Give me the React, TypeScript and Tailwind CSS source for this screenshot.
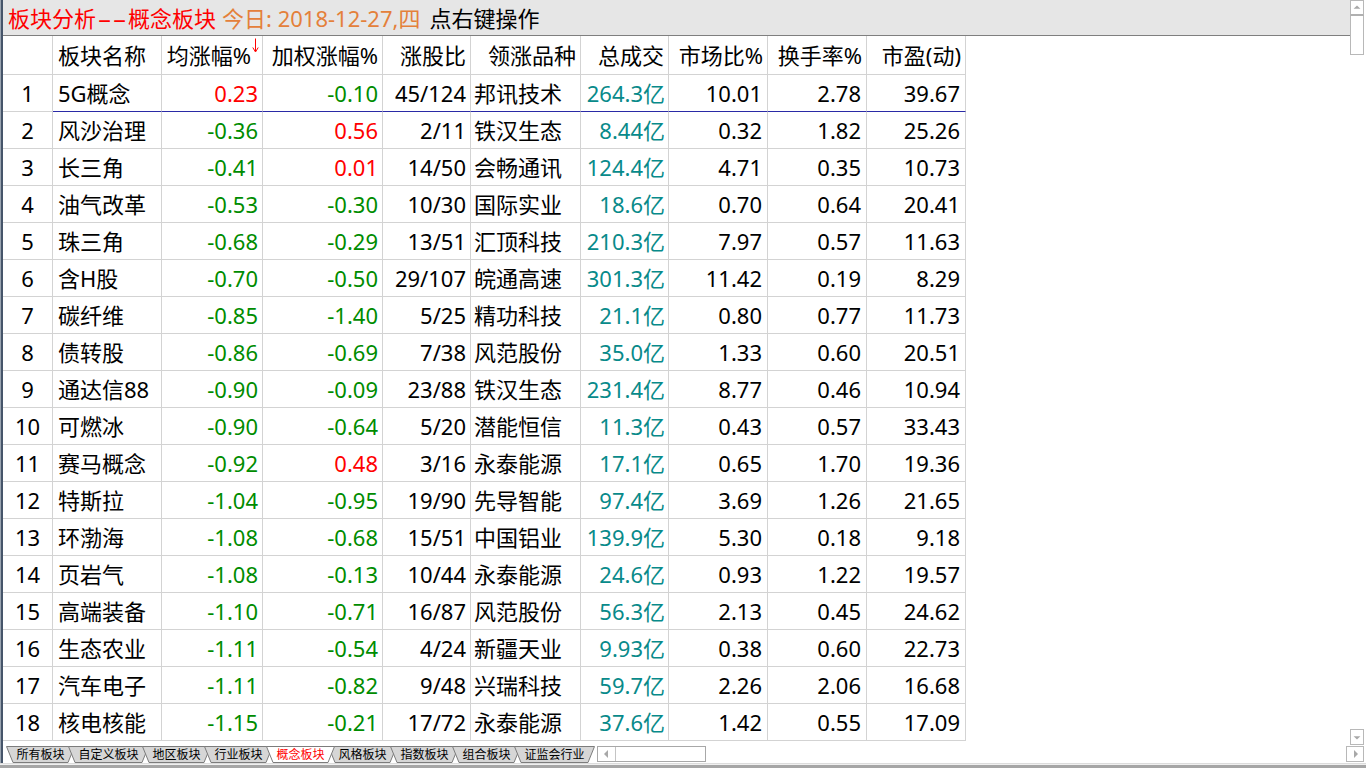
import React from 'react';

type Row = [string, string, string, string, string, string, string, string, string];

const rows: Row[] = [
  ['5G概念', '0.23', '-0.10', '45/124', '邦讯技术', '264.3亿', '10.01', '2.78', '39.67'],
  ['风沙治理', '-0.36', '0.56', '2/11', '铁汉生态', '8.44亿', '0.32', '1.82', '25.26'],
  ['长三角', '-0.41', '0.01', '14/50', '会畅通讯', '124.4亿', '4.71', '0.35', '10.73'],
  ['油气改革', '-0.53', '-0.30', '10/30', '国际实业', '18.6亿', '0.70', '0.64', '20.41'],
  ['珠三角', '-0.68', '-0.29', '13/51', '汇顶科技', '210.3亿', '7.97', '0.57', '11.63'],
  ['含H股', '-0.70', '-0.50', '29/107', '皖通高速', '301.3亿', '11.42', '0.19', '8.29'],
  ['碳纤维', '-0.85', '-1.40', '5/25', '精功科技', '21.1亿', '0.80', '0.77', '11.73'],
  ['债转股', '-0.86', '-0.69', '7/38', '风范股份', '35.0亿', '1.33', '0.60', '20.51'],
  ['通达信88', '-0.90', '-0.09', '23/88', '铁汉生态', '231.4亿', '8.77', '0.46', '10.94'],
  ['可燃冰', '-0.90', '-0.64', '5/20', '潜能恒信', '11.3亿', '0.43', '0.57', '33.43'],
  ['赛马概念', '-0.92', '0.48', '3/16', '永泰能源', '17.1亿', '0.65', '1.70', '19.36'],
  ['特斯拉', '-1.04', '-0.95', '19/90', '先导智能', '97.4亿', '3.69', '1.26', '21.65'],
  ['环渤海', '-1.08', '-0.68', '15/51', '中国铝业', '139.9亿', '5.30', '0.18', '9.18'],
  ['页岩气', '-1.08', '-0.13', '10/44', '永泰能源', '24.6亿', '0.93', '1.22', '19.57'],
  ['高端装备', '-1.10', '-0.71', '16/87', '风范股份', '56.3亿', '2.13', '0.45', '24.62'],
  ['生态农业', '-1.11', '-0.54', '4/24', '新疆天业', '9.93亿', '0.38', '0.60', '22.73'],
  ['汽车电子', '-1.11', '-0.82', '9/48', '兴瑞科技', '59.7亿', '2.26', '2.06', '16.68'],
  ['核电核能', '-1.15', '-0.21', '17/72', '永泰能源', '37.6亿', '1.42', '0.55', '17.09'],
];

const tabs = ['所有板块', '自定义板块', '地区板块', '行业板块', '概念板块', '风格板块', '指数板块', '组合板块', '证监会行业'];

const GRID = 'grid grid-cols-[50px_109px_101px_120px_88px_110px_88px_99px_99px_99px] w-[963px]';
const CELL = 'flex items-center border-r border-b border-[#d3d3d3] whitespace-nowrap overflow-hidden';

const pctColor = (v: string) => {
  const n = parseFloat(v);
  if (n > 0) return 'text-[#ff0000]';
  if (n < 0) return 'text-[#008c00]';
  return 'text-black';
};

const SortArrow = () => (
  <svg width="7" height="15" viewBox="0 0 7 15" className="self-start mt-[2px] ml-[1px]">
    <path d="M3.5 0.5 V13" stroke="#ff0000" strokeWidth="1" />
    <path d="M0.8 9.5 L3.5 14 L6.2 9.5" stroke="#ff0000" strokeWidth="1" fill="none" />
  </svg>
);

const Tab = ({ label, active, first }: { label: string; active: boolean; first: boolean }) => {
  const w = label.length * 12 + 21;
  return (
    <div
      className={`relative h-[17px] shrink-0 ${first ? '' : '-ml-[7px]'} ${active ? 'z-10' : ''} ${
        label.length === 5 ? 'w-[81px]' : 'w-[69px]'
      }`}
    >
      <svg width={w} height="17" className="absolute inset-0">
        <polygon
          points={`0.5,0.5 ${w - 0.5},0.5 ${w - 7},16.5 7,16.5`}
          fill={active ? '#ffffff' : '#d6d6d6'}
          stroke="#7c7c7c"
          strokeWidth="1"
        />
      </svg>
      <div
        className={`relative flex h-full items-center justify-center text-[12px] leading-[16px] ${
          active ? 'text-[#ff0000]' : 'text-black'
        }`}
      >
        {label}
      </div>
    </div>
  );
};

const ScrollBtn = ({ dir }: { dir: 'up' | 'down' | 'left' | 'right' }) => {
  const pts = {
    up: '3,8 7,4 11,8',
    down: '3,6 7,10 11,6',
    left: '8,3 4,7 8,11',
    right: '6,3 10,7 6,11',
  }[dir];
  return (
    <svg width="14" height="14" viewBox="0 0 14 14">
      <polygon points={pts} fill="#a8a8a8" />
    </svg>
  );
};

const Dash = () => <span className="inline-block w-[15px] text-center scale-x-[2]">-</span>;

export default function App() {
  return (
    <div className="w-[1366px] h-[768px] flex flex-col bg-white overflow-hidden font-['Noto_Sans','Noto_Sans_CJK_SC',sans-serif] text-black">
      <div className="flex h-[745px]">
        <div className="w-[3px] border-l border-[#9aa4b0] bg-[#46556a]" />
        <div className="flex-1 flex flex-col">
          {/* title bar */}
          <div className="h-[36px] shrink-0 bg-[#e6e6e6] border-b border-[#7f7f7f] flex items-center pl-[5px] text-[22px] leading-none whitespace-nowrap">
            <span className="text-[#ff0000]">
              板块分析
              <span className="mx-[1px]">
                <Dash />
                <Dash />
              </span>
              概念板块
            </span>
            <span className="ml-[6px] text-[#e4803a]">今日: 2018-12-27,四</span>
            <span className="ml-[9px] text-black">点右键操作</span>
          </div>

          {/* table */}
          <div className="text-[22px] leading-none">
            <div className={`${GRID} h-[39px]`}>
              <div className={CELL} />
              <div className={`${CELL} pl-[5px]`}>板块名称</div>
              <div className={`${CELL} justify-end pr-[3px]`}>
                <span>均涨幅%</span>
                <SortArrow />
              </div>
              {['加权涨幅%', '涨股比', '领涨品种', '总成交', '市场比%', '换手率%', '市盈(动)'].map((h) => (
                <div key={h} className={`${CELL} justify-end pr-[4px]`}>
                  {h}
                </div>
              ))}
            </div>

            {rows.map((r, i) => {
              const sel = i === 0;
              const b = sel ? 'border-b-[#2a2aa6]' : '';
              return (
                <div key={i} className={`${GRID} h-[37px]`}>
                  <div className={`${CELL} justify-center`}>{i + 1}</div>
                  <div className={`${CELL} ${b} pl-[5px]`}>{r[0]}</div>
                  <div className={`${CELL} ${b} justify-end pr-[4px] ${pctColor(r[1])}`}>{r[1]}</div>
                  <div className={`${CELL} ${b} justify-end pr-[4px] ${pctColor(r[2])}`}>{r[2]}</div>
                  <div className={`${CELL} ${b} justify-end pr-[4px]`}>{r[3]}</div>
                  <div className={`${CELL} ${b} pl-[3px]`}>{r[4]}</div>
                  <div className={`${CELL} ${b} justify-end pr-[3px] text-[#088a8a]`}>{r[5]}</div>
                  <div className={`${CELL} ${b} justify-end pr-[5px]`}>{r[6]}</div>
                  <div className={`${CELL} ${b} justify-end pr-[5px]`}>{r[7]}</div>
                  <div className={`${CELL} ${b} justify-end pr-[5px]`}>{r[8]}</div>
                </div>
              );
            })}
          </div>
        </div>

        {/* vertical scrollbar */}
        <div className="w-[14px] flex flex-col">
          <div className="h-[16px] border border-[#b8b8b8] border-b-2 border-b-[#b0b0b0] flex items-center justify-center">
            <ScrollBtn dir="up" />
          </div>
          <div className="h-[39px] border border-t-0 border-[#b8b8b8] bg-white" />
          <div className="flex-1" />
          <div className="h-[16px] border border-[#b8b8b8] flex items-center justify-center">
            <ScrollBtn dir="down" />
          </div>
        </div>
        <div className="w-[2px]" />
      </div>

      {/* sheet tabs */}
      <div className="flex h-[18px] items-end">
        <div className="w-[3px] h-full border-l border-[#9aa4b0] bg-[#46556a]" />
        <div className="w-[3px]" />
        <div className="flex items-end">
          {tabs.map((t, i) => (
            <Tab key={t} label={t} active={t === '概念板块'} first={i === 0} />
          ))}
        </div>
        <div className="ml-[2px] mb-[1px] w-[109px] h-[16px] border border-[#a8a8a8] flex">
          <div className="w-[18px] border-r border-[#c4c4c4] flex items-center justify-center">
            <ScrollBtn dir="left" />
          </div>
        </div>
        <div className="flex-1" />
        <div className="mb-[1px] w-[18px] h-[16px] border border-[#b8b8b8] flex items-center justify-center">
          <ScrollBtn dir="right" />
        </div>
        <div className="w-[2px]" />
      </div>

      {/* bottom edge */}
      <div className="h-[5px] flex flex-col">
        <div className="h-[1px] bg-[#dcdcdc]" />
        <div className="h-[1px] bg-[#f0f0f0]" />
        <div className="flex-1 bg-[#a6a6a6]" />
      </div>
    </div>
  );
}
